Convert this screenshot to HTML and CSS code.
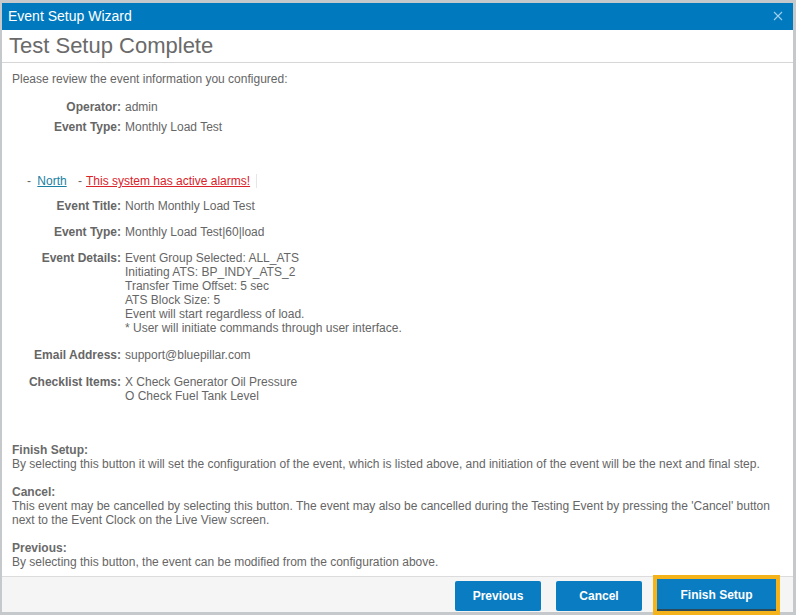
FILE: index.html
```html
<!DOCTYPE html>
<html lang="en">
<head>
    <meta charset="UTF-8">
    <title>Event Setup Wizard</title>
    <link rel="stylesheet" href="styles.css">
</head>
<body>
    <div class="dialog">
        <div class="titlebar">
            <span class="title">Event Setup Wizard</span>
            <svg class="close" width="10" height="10" viewBox="0 0 10 10">
                <path d="M1 1L9 9M9 1L1 9" stroke="#9fd0f0" stroke-width="1.1" fill="none"/>
            </svg>
        </div>
        <h1 class="heading">Test Setup Complete</h1>
        <div class="content">
            <p class="intro">Please review the event information you configured:</p>

            <div class="summary">
                <div class="label">Operator:</div>
                <div class="value">admin</div>
                <div class="label">Event Type:</div>
                <div class="value">Monthly Load Test</div>
            </div>

            <div class="site">
                <span class="dash">-</span>
                <a class="site-link" href="#">North</a>
                <span class="dash dash-alarm">-</span><a class="alarm" href="#">This system has active alarms!</a>
            </div>

            <div class="details">
                <div class="label">Event Title:</div>
                <div class="value">North Monthly Load Test</div>
                <div class="label">Event Type:</div>
                <div class="value">Monthly Load Test|60|load</div>
                <div class="label">Event Details:</div>
                <div class="value">
                    Event Group Selected: ALL_ATS<br>
                    Initiating ATS: BP_INDY_ATS_2<br>
                    Transfer Time Offset: 5 sec<br>
                    ATS Block Size: 5<br>
                    Event will start regardless of load.<br>
                    * User will initiate commands through user interface.
                </div>
                <div class="label spaced">Email Address:</div>
                <div class="value spaced">support@bluepillar.com</div>
                <div class="label spaced">Checklist Items:</div>
                <div class="value spaced">
                    X Check Generator Oil Pressure<br>
                    O Check Fuel Tank Level
                </div>
            </div>

            <div class="help">
                <div class="help-item">
                    <strong>Finish Setup:</strong><br>
                    By selecting this button it will set the configuration of the event, which is listed above, and initiation of the event will be the next and final step.
                </div>
                <div class="help-item">
                    <strong>Cancel:</strong><br>
                    This event may be cancelled by selecting this button. The event may also be cancelled during the Testing Event by pressing the 'Cancel' button next to the Event Clock on the Live View screen.
                </div>
                <div class="help-item">
                    <strong>Previous:</strong><br>
                    By selecting this button, the event can be modified from the configuration above.
                </div>
            </div>
        </div>
        <div class="footer">
            <button class="btn">Previous</button>
            <button class="btn">Cancel</button>
            <button class="btn btn-finish">Finish Setup</button>
        </div>
    </div>
</body>
</html>
```

FILE: styles.css
```css
body {
    margin: 0;
    padding: 3px 3px 3px 2px;
    background: #c5c9cc;
    font-family: "Liberation Sans", Arial, sans-serif;
    font-size: 12px;
    line-height: 14px;
    color: #666;
}

.dialog {
    height: 609px;
    background: #fff;
    display: flex;
    flex-direction: column;
}

.titlebar {
    flex-shrink: 0;
    height: 27px;
    background: #0079be;
    color: #fff;
    display: flex;
    align-items: center;
    justify-content: space-between;
    padding: 0 10px 0 6px;
}

.title {
    font-size: 14px;
    margin-top: -1px;
}

.close {
    margin-top: -2px;
}

.heading {
    flex-shrink: 0;
    margin: 0;
    height: 33px;
    box-sizing: border-box;
    border-bottom: 1px solid #d6d6d6;
    font-weight: normal;
    font-size: 22px;
    line-height: 32px;
    color: #6a6a6a;
    padding-left: 7px;
}

.content {
    flex: 1;
    min-height: 0;
    overflow: hidden;
    padding: 9px 10px 0 10px;
}

.intro {
    margin: 0 0 14px;
}

.summary,
.details {
    display: grid;
    grid-template-columns: 109px 1fr;
    column-gap: 4px;
}

.summary {
    row-gap: 6px;
}

.details {
    row-gap: 12px;
}

.details .spaced {
    margin-top: 1px;
}

.label {
    text-align: right;
    font-weight: bold;
}

.site {
    margin: 40px 0 11px 15px;
}

.site .dash {
    margin-right: 2px;
}

.site .dash-alarm {
    margin-right: 4px;
}

.site-link {
    color: #1b7fa3;
    margin-left: 1px;
    margin-right: 8px;
}

.alarm {
    color: #d9222a;
    padding-right: 6px;
    border-right: 1px solid #e6e6e6;
}

.help {
    margin-top: 40px;
}

.help-item {
    margin-bottom: 14px;
}

.help-item:last-child {
    margin-bottom: 0;
}

.help-item strong {
    color: #6a6a6a;
}

.footer {
    flex-shrink: 0;
    height: 36px;
    box-sizing: border-box;
    border-top: 1px solid #dcdcdc;
    background: #f5f5f5;
    display: flex;
    justify-content: flex-end;
    align-items: flex-start;
    gap: 15px;
    padding: 4px 17px 0 0;
}

.btn {
    height: 30px;
    width: 86px;
    border: none;
    border-radius: 2px;
    background: #0a7cc1;
    color: #fff;
    font-family: inherit;
    font-size: 12px;
    font-weight: bold;
    cursor: pointer;
}

.btn-finish {
    width: 119px;
    height: 32px;
    margin-top: -2px;
    border-radius: 0;
    outline: 4px solid #f5b31b;
    outline-offset: 0;
    box-shadow: inset 0 -2px 0 #2b4a5c;
}
```
